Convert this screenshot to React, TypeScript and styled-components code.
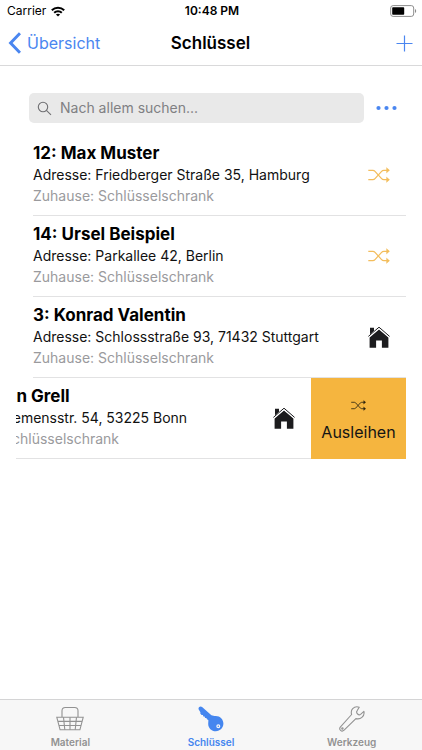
import React from 'react';
import styled, { createGlobalStyle, css } from 'styled-components';

const BLUE = '#4a86f0';
const AMBER = '#f5b53f';

const GlobalStyle = createGlobalStyle`
  *, *::before, *::after { box-sizing: border-box; }
  html, body, #root { height: 100%; }
  body {
    margin: 0;
    background: #fff;
    color: #000;
    font-family: Inter, "Liberation Sans", sans-serif;
  }
  button, input { font: inherit; color: inherit; }
  button { border: 0; padding: 0; background: none; cursor: pointer; }
  h1, h2, p, ul { margin: 0; padding: 0; }
  ul { list-style: none; }
`;

const Screen = styled.div`
  display: flex;
  flex-direction: column;
  min-height: 100vh;
`;

const Bar = styled.div`
  display: grid;
  grid-template-columns: 1fr auto 1fr;
  align-items: center;
`;

const StatusBar = styled(Bar)`
  height: 22px;
  padding: 0 5px 0 7px;
  font-size: 12px;
  line-height: 16px;
`;

const Carrier = styled.span`
  display: flex;
  align-items: center;
  gap: 5px;
`;

const Clock = styled.time`
  font-weight: 600;
`;

const End = styled.span`
  display: flex;
  justify-content: flex-end;
`;

const NavBar = styled(Bar).attrs({ as: 'header' })`
  height: 44px;
  padding: 0 9px 1px 8px;
  border-bottom: 1px solid #d9d9da;
`;

const BackLink = styled.a`
  display: flex;
  align-items: center;
  gap: 6px;
  color: ${BLUE};
  font-size: 16px;
  line-height: 22px;
  text-decoration: none;
`;

const Heading = styled.h1`
  font-size: 17px;
  line-height: 22px;
  font-weight: 600;
`;

const IconButton = styled.button`
  display: flex;
  color: ${BLUE};
`;

const Main = styled.main`
  flex: 1;
  padding: 27px 16px 0;
`;

const SearchRow = styled.form`
  display: flex;
  align-items: center;
  gap: 12px;
  padding: 0 9px 0 13px;
`;

const SearchBox = styled.label`
  flex: 1;
  display: flex;
  align-items: center;
  gap: 8px;
  height: 30px;
  padding: 0 8px;
  border-radius: 5px;
  background: #e9e9e9;
  color: #6f6f72;
`;

const SearchInput = styled.input`
  flex: 1;
  min-width: 0;
  padding: 0;
  border: 0;
  outline: 0;
  background: none;
  font-size: 14px;
  line-height: 20px;
  &::placeholder { color: #808083; opacity: 1; }
`;

const KeyList = styled.ul`
  margin-top: 12px;
`;

const KeyItem = styled.li`
  display: flex;
  justify-content: flex-end;
  overflow: hidden;
`;

const KeyContent = styled.div<{ $open: boolean }>`
  flex: 0 0 100%;
  display: flex;
  padding-left: 17px;
  ${({ $open }) => $open && css`background: #fff;`}
`;

const KeyBody = styled.div`
  flex: 1;
  display: flex;
  align-items: center;
  justify-content: space-between;
  height: 81px;
  padding-right: 16px;
  border-bottom: 1px solid #e2e2e3;
`;

const KeyText = styled.div`
  padding-bottom: 3px;
  white-space: nowrap;
`;

const KeyName = styled.h2`
  font-size: 17px;
  line-height: 22px;
  font-weight: 700;
`;

const KeyLine = styled.p<{ $muted?: boolean }>`
  font-size: 14px;
  line-height: 21px;
  color: ${({ $muted }) => ($muted ? '#9a9a9d' : '#111')};
`;

const LendButton = styled.button`
  flex: 0 0 95px;
  display: flex;
  flex-direction: column;
  align-items: center;
  justify-content: center;
  gap: 8px;
  padding-top: 4px;
  background: ${AMBER};
  color: #141414;
  font-size: 16px;
  line-height: 22px;
`;

const TabBar = styled.nav`
  display: grid;
  grid-template-columns: repeat(3, 1fr);
  height: 51px;
  border-top: 1px solid #d4d4d5;
  background: #f7f7f7;
`;

const Tab = styled.a<{ $active: boolean }>`
  display: flex;
  flex-direction: column;
  align-items: center;
  justify-content: flex-end;
  gap: 3px;
  padding-bottom: 1px;
  color: ${({ $active }) => ($active ? '#4586ef' : '#929292')};
  font-size: 10px;
  line-height: 14px;
  font-weight: 600;
  text-decoration: none;
`;

const WifiIcon = () => (
  <svg width="14" height="11" viewBox="0 0 14 11" fill="none" stroke="#000" strokeWidth="2" aria-hidden="true">
    <path d="M.8 4.2C4.3 .8 9.7 .8 13.2 4.2" />
    <path d="M3.2 6.8c2.1-2.1 5.5-2.1 7.6 0" />
    <path d="M7 10.6 4.9 8.5c1.2-1.1 3-1.1 4.2 0z" fill="#000" stroke="none" />
  </svg>
);

const BatteryIcon = () => (
  <svg width="27" height="12" viewBox="0 0 27 12" aria-hidden="true">
    <rect x=".7" y=".6" width="23" height="10.8" rx="2.4" fill="none" stroke="#8d8d8d" />
    <rect x="2.2" y="2.2" width="12" height="7.6" rx=".8" fill="#000" />
    <path d="M25 4c1.6.6 1.6 3.4 0 4z" fill="#8d8d8d" />
  </svg>
);

const BackIcon = () => (
  <svg width="13" height="22" viewBox="0 0 13 22" fill="none" stroke="currentColor" strokeWidth="3" aria-hidden="true">
    <path d="M12 1.2 2.6 11 12 20.8" />
  </svg>
);

const PlusIcon = () => (
  <svg width="17" height="17" viewBox="0 0 17 17" stroke="currentColor" strokeWidth="1.2" aria-hidden="true">
    <path d="M8.5.5v16M.5 8.5h16" />
  </svg>
);

const SearchIcon = () => (
  <svg width="15" height="15" viewBox="0 0 15 15" fill="none" stroke="currentColor" strokeWidth="1.1" aria-hidden="true">
    <circle cx="6" cy="6" r="4.7" />
    <path d="m9.4 9.4 4.6 4.4" />
  </svg>
);

const DotsIcon = () => (
  <svg width="21" height="6" viewBox="0 0 21 6" fill="currentColor" aria-hidden="true">
    <circle cx="2.5" cy="3" r="2.1" />
    <circle cx="10.5" cy="3" r="2.1" />
    <circle cx="18.5" cy="3" r="2.1" />
  </svg>
);

const ShuffleIcon = ({ size, color }: { size: number; color: string }) => (
  <svg width={size} height={size} viewBox="0 0 22 22" fill="none" stroke={color} strokeWidth="1.2" aria-hidden="true">
    <path d="M.3 6.300h4.500c1 0 1.600.3 2.200 1l6.600 7.400c.6.700 1.200 1 2.200 1h5" />
    <path d="M.3 15.700h4.500c1 0 1.600-.3 2.200-1l6.600-7.400c.6-.7 1.200-1 2.200-1h5" />
    <path d="m18.500 3.600 3.100 2.700-3.100 2.700zM18.500 13l3.100 2.700-3.100 2.700z" fill={color} strokeWidth=".3" />
  </svg>
);

const HouseIcon = () => (
  <svg width="22" height="22" viewBox="0 0 22 22" fill="#1c1c1e" aria-hidden="true">
    <path d="M2 1.800h4v3.400L2 8.700z" />
    <path d="M11 3.600 1.600 11.400v10.400h6.500v-7.200h5.800v7.200h6.500V11.400z" />
    <path d="M.4 10.900 11 1.900l10.600 9" fill="none" stroke="#fff" strokeWidth="1.800" />
    <path d="M.4 10.400 11 1.200l10.600 9.200" fill="none" stroke="#1c1c1e" strokeWidth="1" />
  </svg>
);

const BasketIcon = () => (
  <svg width="28" height="26" viewBox="0 0 28 26" fill="none" stroke="currentColor" strokeWidth="1.1" aria-hidden="true">
    <path d="M6 11V4.800C6 2.500 7.200 1.500 9.300 1.500h9.400c2.100 0 3.300 1 3.300 3.300V11" />
    <path d="M.8 11.300h26.400l-3.300 12.500H4.100zM1.900 15.400h24.200M3 19.500h22" />
    <path d="m7.500 11.300 1.300 12.500M14 11.300v12.500M20.500 11.300l-1.300 12.500" />
  </svg>
);

const KeyIcon = () => (
  <svg width="26" height="26" viewBox="0 0 26 26" fill="currentColor" aria-hidden="true">
    <path
      fillRule="evenodd"
      d="M1.200 1C2.100.2 3.200.3 4.100 1l9.300 8.300c1.500.3 2.600.7 4.300.7 4.500 0 7.700 3.400 7.700 7.600s-3.300 7.600-7.600 7.600-7.600-3.200-7.600-7.300c0-1.400.2-2.400.2-3.600l-1.600-1.200-.4-1.100-1.300-.1-.5-1.400-1.300-.1-.4-1.300-1.300-.1L2.300 7.600l.1-1.300L1 4.100C.3 3.100.3 1.800 1.200 1zM20.300 18.200a2 2 0 1 0 0 4 2 2 0 0 0 0-4zm0 1.200a.8.8 0 1 1 0 1.600.8.800 0 0 1 0-1.600z"
    />
  </svg>
);

const WrenchIcon = () => (
  <svg width="26" height="26" viewBox="0 0 26 26" fill="none" stroke="currentColor" strokeWidth="1.100" strokeLinejoin="round" aria-hidden="true">
    <path d="M20.200 1.200c-2.300-.8-4.900-.2-6.500 1.500-1.500 1.600-1.700 3.700-1.100 5.800L1.500 20.900c-1 1.200-.9 2.600.1 3.500s2.400.8 3.500-.2l11.800-11.600c2.200.6 4.400.2 6-1.200 1.900-1.600 2.500-3.800 2-6l-3.300 3c-.9.700-2.100.5-3-.4-1-1-1.200-2.300-.5-3.200z" />
    <circle cx="3.400" cy="22.500" r=".7" />
  </svg>
);

type KeyEntry = {
  name: string;
  address: string;
  home: string;
  lent: boolean;
  open?: boolean;
};

const keys: KeyEntry[] = [
  { name: '12: Max Muster', address: 'Friedberger Straße 35, Hamburg', home: 'Schlüsselschrank', lent: true },
  { name: '14: Ursel Beispiel', address: 'Parkallee 42, Berlin', home: 'Schlüsselschrank', lent: true },
  { name: '3: Konrad Valentin', address: 'Schlossstraße 93, 71432 Stuttgart', home: 'Schlüsselschrank', lent: false },
  { name: '20: Florian Grell', address: 'Siemensstr. 54, 53225 Bonn', home: 'Schlüsselschrank', lent: false, open: true },
];

const tabs = [
  { label: 'Material', icon: <BasketIcon />, active: false },
  { label: 'Schlüssel', icon: <KeyIcon />, active: true },
  { label: 'Werkzeug', icon: <WrenchIcon />, active: false },
];

const KeyRow = ({ name, address, home, lent, open = false }: KeyEntry) => (
  <KeyItem>
    <KeyContent $open={open}>
      <KeyBody>
        <KeyText>
          <KeyName>{name}</KeyName>
          <KeyLine>Adresse: {address}</KeyLine>
          <KeyLine $muted>Zuhause: {home}</KeyLine>
        </KeyText>
        {lent ? <ShuffleIcon size={22} color="#f3bd5c" /> : <HouseIcon />}
      </KeyBody>
    </KeyContent>
    {open && (
      <LendButton type="button">
        <ShuffleIcon size={15} color="#2b2410" />
        Ausleihen
      </LendButton>
    )}
  </KeyItem>
);

export default function App() {
  return (
    <Screen>
      <GlobalStyle />
      <StatusBar>
        <Carrier>
          Carrier
          <WifiIcon />
        </Carrier>
        <Clock>10:48 PM</Clock>
        <End>
          <BatteryIcon />
        </End>
      </StatusBar>
      <NavBar>
        <BackLink href="#overview">
          <BackIcon />
          Übersicht
        </BackLink>
        <Heading>Schlüssel</Heading>
        <End>
          <IconButton type="button" aria-label="Hinzufügen">
            <PlusIcon />
          </IconButton>
        </End>
      </NavBar>
      <Main>
        <SearchRow>
          <SearchBox>
            <SearchIcon />
            <SearchInput type="text" aria-label="Suchen" placeholder="Nach allem suchen..." />
          </SearchBox>
          <IconButton type="button" aria-label="Mehr">
            <DotsIcon />
          </IconButton>
        </SearchRow>
        <KeyList>
          {keys.map((entry) => (
            <KeyRow key={entry.name} {...entry} />
          ))}
        </KeyList>
      </Main>
      <TabBar>
        {tabs.map(({ label, icon, active }) => (
          <Tab key={label} href={`#${label}`} $active={active} aria-current={active ? 'page' : undefined}>
            {icon}
            {label}
          </Tab>
        ))}
      </TabBar>
    </Screen>
  );
}
